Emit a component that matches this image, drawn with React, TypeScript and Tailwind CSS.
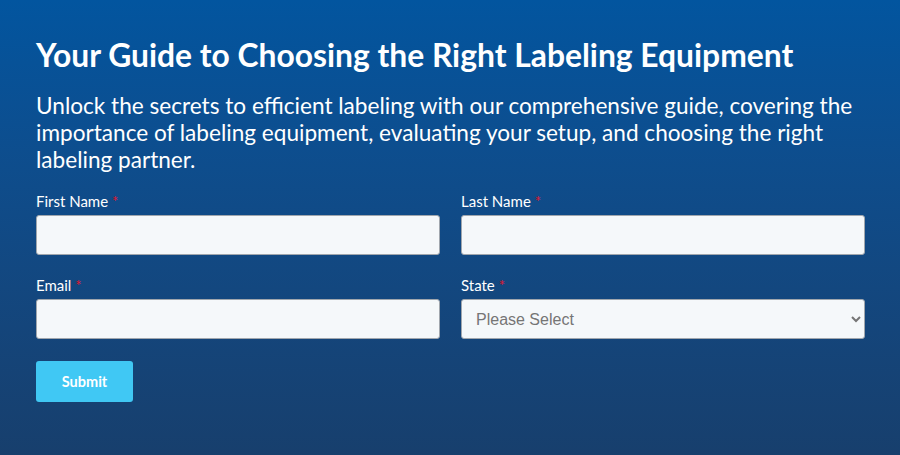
import React from 'react';

const Label: React.FC<{ text: string }> = ({ text }) => (
  <label className="block text-[15px] leading-[18px] text-white mb-[5px]" style={{ fontFamily: 'Lato, sans-serif' }}>
    {text} <span className="text-[#e0152d]">*</span>
  </label>
);

const inputCls =
  'block w-full h-[40px] rounded-[3px] border border-[#a0a6ad] bg-[#f5f8fa] px-[10px] text-[16px] text-[#33475b] outline-none';

const App: React.FC = () => {
  return (
    <div className="w-[900px] h-[455px] bg-gradient-to-b from-[#02559f] to-[#173f6d] px-[36px] pt-[36px] overflow-hidden">
      <h1 className="text-[31.8px] leading-[38px] font-bold text-white" style={{ fontFamily: 'Lato, sans-serif' }}>
        Your Guide to Choosing the Right Labeling Equipment
      </h1>
      <p className="mt-[18px] text-[22.6px] leading-[27px] text-white" style={{ fontFamily: 'Lato, sans-serif' }}>
        Unlock the secrets to efficient labeling with our comprehensive guide, covering the importance of labeling
        equipment, evaluating your setup, and choosing the right labeling partner.
      </p>
      <form className="mt-[19px] w-[829px]" onSubmit={(e) => e.preventDefault()}>
        <div className="grid grid-cols-2 gap-x-[21px] gap-y-[21px]">
          <div>
            <Label text="First Name" />
            <input className={inputCls} />
          </div>
          <div>
            <Label text="Last Name" />
            <input className={inputCls} />
          </div>
          <div>
            <Label text="Email" />
            <input className={inputCls} />
          </div>
          <div>
            <Label text="State" />
            <select
              className={inputCls + ' text-[#757575] pl-[10px]'}
              style={{ fontFamily: '"Liberation Sans", Arial, sans-serif' }}
              defaultValue=""
            >
              <option value="">Please Select</option>
            </select>
          </div>
        </div>
        <button
          type="submit"
          className="mt-[22px] w-[97px] h-[41px] rounded-[3px] bg-[#40c8f4] text-white text-[14.5px] font-bold"
          style={{ fontFamily: 'Lato, sans-serif' }}
        >
          Submit
        </button>
      </form>
    </div>
  );
};

export default App;
